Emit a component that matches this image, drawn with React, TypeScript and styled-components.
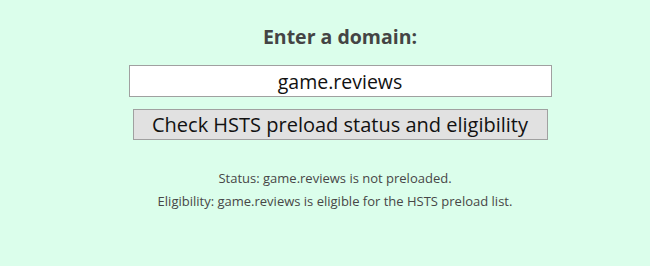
import React, { useEffect, useRef } from 'react';
import styled, { createGlobalStyle } from 'styled-components';

const GlobalStyle = createGlobalStyle`
    html, body {
        margin: 0;
        padding: 0;
        background-color: #dbfeeb;
    }
    body {
        font-family: 'Open Sans', 'Noto Sans', sans-serif;
    }
`;

const Page = styled.div`
    display: flex;
    flex-direction: column;
    align-items: center;
    width: 680px;
    height: 266px;
    padding-top: 24px;
    box-sizing: border-box;
`;

const Heading = styled.h2`
    margin: 0;
    font-size: 19.5px;
    font-weight: 700;
    color: #444444;
    line-height: 26px;
`;

const DomainInput = styled.input`
    margin-top: 15px;
    width: 423px;
    height: 32px;
    box-sizing: border-box;
    border: 1px solid #a0a0a0;
    background: #ffffff;
    font-family: 'Open Sans', 'Noto Sans', sans-serif;
    font-size: 19.5px;
    color: #111111;
    caret-color: #111111;
    text-align: center;
    padding: 0;
    outline: none;
`;

const CheckButton = styled.button`
    margin-top: 12px;
    width: 415px;
    height: 31px;
    box-sizing: border-box;
    border: 1px solid #a0a0a0;
    background: #e1e1e1;
    font-family: 'Open Sans', 'Noto Sans', sans-serif;
    font-size: 20px;
    color: #111111;
    padding: 0;
    line-height: 28px;
`;

const Results = styled.div`
    margin-top: 29px;
    margin-right: 10px;
    display: flex;
    flex-direction: column;
    align-items: center;
    gap: 5px;
`;

const ResultLine = styled.div`
    font-size: 13px;
    line-height: 18px;
    color: #474747;
`;

const App: React.FC = () => {
    const inputRef = useRef<HTMLInputElement>(null);

    useEffect(() => {
        const el = inputRef.current;
        if (el) {
            el.focus();
            el.setSelectionRange(el.value.length, el.value.length);
        }
    }, []);

    return (
        <>
            <GlobalStyle />
            <Page>
                <Heading>Enter a domain:</Heading>
                <DomainInput ref={inputRef} defaultValue='game.reviews' />
                <CheckButton>Check HSTS preload status and eligibility</CheckButton>
                <Results>
                    <ResultLine>Status: game.reviews is not preloaded.</ResultLine>
                    <ResultLine>Eligibility: game.reviews is eligible for the HSTS preload list.</ResultLine>
                </Results>
            </Page>
        </>
    );
};

export default App;
